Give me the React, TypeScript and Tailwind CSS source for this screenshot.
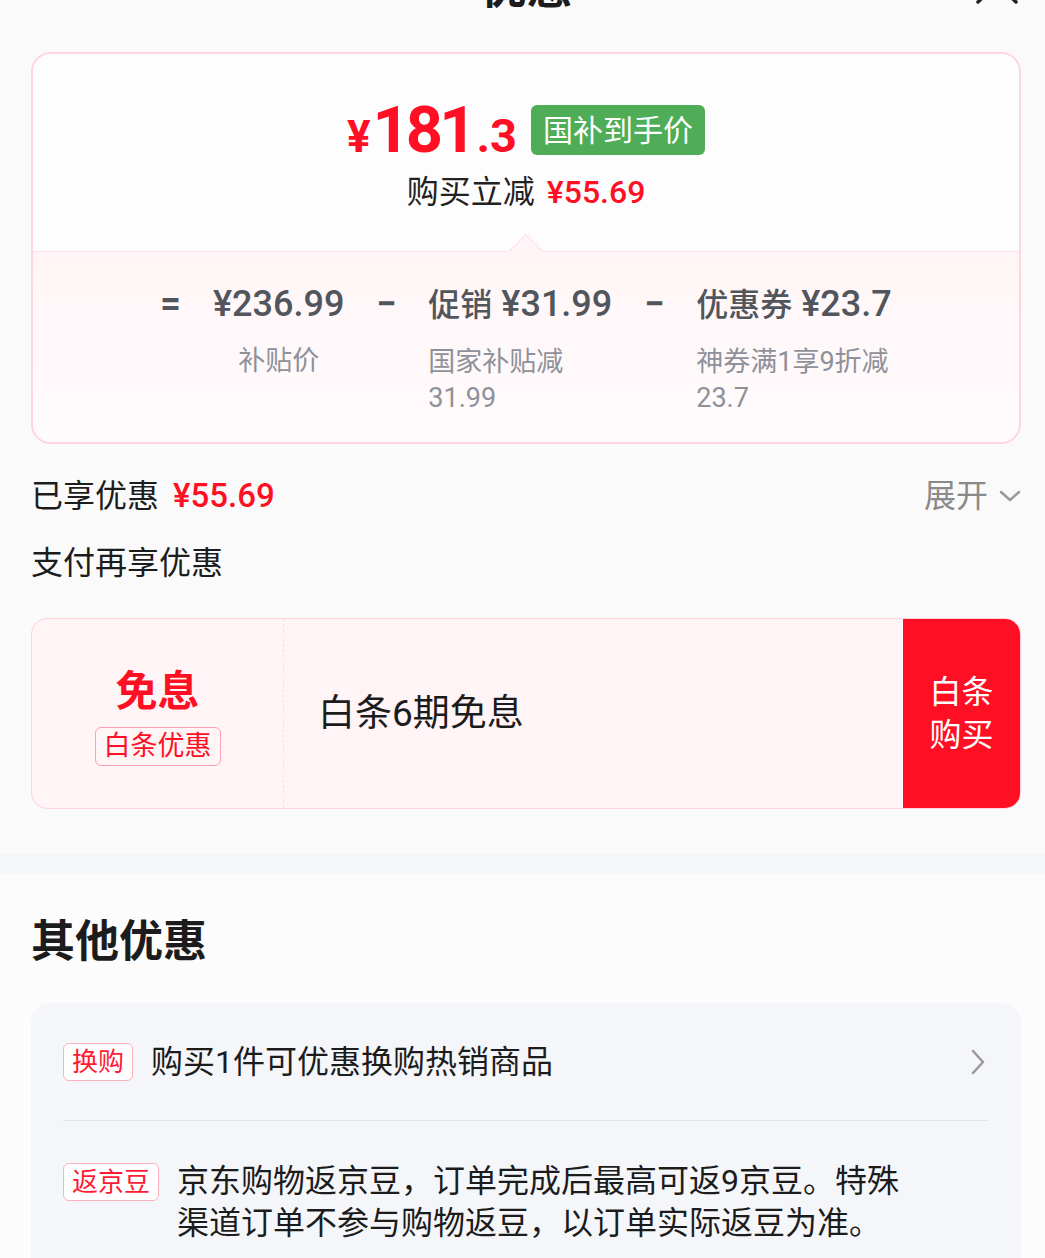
import React from 'react';

const red = 'text-[#ff0f23]';

function Tag({ children }: { children: React.ReactNode }) {
  return (
    <span className="shrink-0 h-[38px] px-[8px] rounded-[6px] border border-[#ffb0bf] bg-white text-[#ff1a33] text-[26px] leading-[36px]">
      {children}
    </span>
  );
}

export default function App() {
  return (
    <div className="min-h-screen w-[1045px] overflow-hidden bg-[#fafafa] font-['Roboto','Noto_Sans_CJK_SC',sans-serif] text-[#1c1c1c]">
      {/* sheet header, mostly scrolled away */}
      <div className="relative h-[52px] flex justify-center pl-[8px]">
        <h1 className="-mt-[36px] text-[46px] leading-none font-bold">优惠</h1>
        <svg
          className="absolute right-[26px] -top-[39px] w-[44px] h-[44px]"
          viewBox="0 0 44 44"
          fill="none"
          stroke="#222"
          strokeWidth="3.5"
          strokeLinecap="round"
        >
          <path d="M3 3L41 41M41 3L3 41" />
        </svg>
      </div>

      <div className="pl-[31px] pr-[24px]">
        {/* price breakdown card */}
        <div className="rounded-[20px] border-[2.5px] border-[#ffd6e0] overflow-hidden">
          <div className="bg-[#fefdfd] pt-[51px] pb-[39px] flex flex-col items-center">
            <div className="h-[50px] flex items-center gap-[14px]">
              <div className={`flex items-baseline font-bold leading-none ${red}`}>
                <span className="text-[44px]">¥</span>
                <span className="text-[65px] tracking-[-4px] ml-[2px]">181</span>
                <span className="text-[47px] ml-[4px]">.3</span>
              </div>
              <div className="h-[50px] px-[12px] rounded-[6px] bg-[#4ead56] text-white text-[30px] flex items-center">
                国补到手价
              </div>
            </div>
            <div className="mt-[17px] text-[32px] leading-[40px] text-[#222]">
              购买立减<span className={`ml-[12px] font-medium ${red}`}>¥55.69</span>
            </div>
          </div>

          <div className="relative border-t border-[#ffe4ea] bg-linear-to-b from-[#fff5f7] to-[#fffbfc] pt-[32px] pb-[26px] flex justify-center items-start gap-[32px] text-[#51555c]">
            <div className="absolute left-1/2 -top-[13px] -ml-[12px] w-[24px] h-[24px] rotate-45 border-l border-t border-[#ffdde5] bg-[#fff5f7]" />
            <span className="text-[36px] leading-[40px] font-bold">=</span>
            <div className="flex flex-col items-center">
              <div className="text-[36px] leading-[40px] font-medium">¥236.99</div>
              <div className="mt-[19px] text-[27px] leading-[36px] text-[#8e9199]">补贴价</div>
            </div>
            <span className="text-[36px] leading-[40px] font-bold">−</span>
            <div className="flex flex-col items-start">
              <div className="text-[36px] leading-[40px] font-medium">
                <span className="text-[32px]">促销</span> ¥31.99
              </div>
              <div className="mt-[19px] text-[27px] leading-[36px] text-[#8e9199]">
                <div>国家补贴减</div>
                <div>31.99</div>
              </div>
            </div>
            <span className="text-[36px] leading-[40px] font-bold">−</span>
            <div className="flex flex-col items-start">
              <div className="text-[36px] leading-[40px] font-medium">
                <span className="text-[32px]">优惠券</span> ¥23.7
              </div>
              <div className="mt-[19px] text-[27px] leading-[36px] text-[#8e9199]">
                <div>神券满1享9折减</div>
                <div>23.7</div>
              </div>
            </div>
          </div>
        </div>

        <div className="mt-[30px] flex items-center justify-between">
          <div className="text-[32px] leading-[44px]">
            已享优惠<span className={`ml-[14px] text-[33px] font-medium ${red}`}>¥55.69</span>
          </div>
          <div className="flex items-center text-[32px] leading-[44px] text-[#8a8a8a]">
            展开
            <svg className="ml-[11px] w-[22px] h-[14px]" viewBox="0 0 22 14" fill="none" stroke="#999" strokeWidth="2.5" strokeLinecap="round" strokeLinejoin="round">
              <path d="M2 3L11 11L20 3" />
            </svg>
          </div>
        </div>

        <div className="mt-[23px] text-[32px] leading-[44px]">支付再享优惠</div>

        {/* baitiao card */}
        <div className="mt-[33px] h-[191px] flex rounded-[16px] border-[1.5px] border-[#ffd2dc] bg-[#fff5f7] overflow-hidden">
          <div className="w-[252px] border-r border-dashed border-[#ffdbe2] flex flex-col items-center justify-center pt-[6px]">
            <div className={`text-[42px] leading-[48px] font-bold ${red}`}>免息</div>
            <div className={`mt-[11px] h-[39px] px-[8px] rounded-[6px] border border-[#ff9fb1] text-[27px] leading-[37px] ${red}`}>
              白条优惠
            </div>
          </div>
          <div className="flex-1 pl-[34px] flex items-center text-[37px]">白条6期免息</div>
          <div className="w-[117px] bg-[#ff0f23] text-white text-[32px] leading-[43px] flex flex-col items-center justify-center">
            <span>白条</span>
            <span>购买</span>
          </div>
        </div>
      </div>

      <div className="mt-[45px] h-[20px] bg-[#f5f6fa]" />

      <div className="bg-[#fcfcfc] pl-[31px] pr-[24px] pb-[40px]">
        <h2 className="pt-[42px] text-[44px] leading-[52px] font-bold">其他优惠</h2>

        <div className="mt-[35px] rounded-[20px] bg-[#f5f6fa] px-[32px]">
          <div className="h-[117px] flex items-center">
            <Tag>换购</Tag>
            <span className="ml-[18px] text-[32px] leading-[42px]">购买1件可优惠换购热销商品</span>
            <svg className="ml-auto mr-[3px] w-[16px] h-[26px]" viewBox="0 0 16 26" fill="none" stroke="#999" strokeWidth="2.5" strokeLinecap="round" strokeLinejoin="round">
              <path d="M3 2L13 13L3 24" />
            </svg>
          </div>
          <div className="h-px bg-[#e5e6eb]" />
          <div className="pt-[39px] pb-[40px] flex items-start">
            <span className="mt-[3px] flex">
              <Tag>返京豆</Tag>
            </span>
            <p className="ml-[18px] w-[740px] text-[32px] leading-[42px]">
              京东购物返京豆，订单完成后最高可返9京豆。特殊渠道订单不参与购物返豆，以订单实际返豆为准。
            </p>
          </div>
        </div>
      </div>
    </div>
  );
}
